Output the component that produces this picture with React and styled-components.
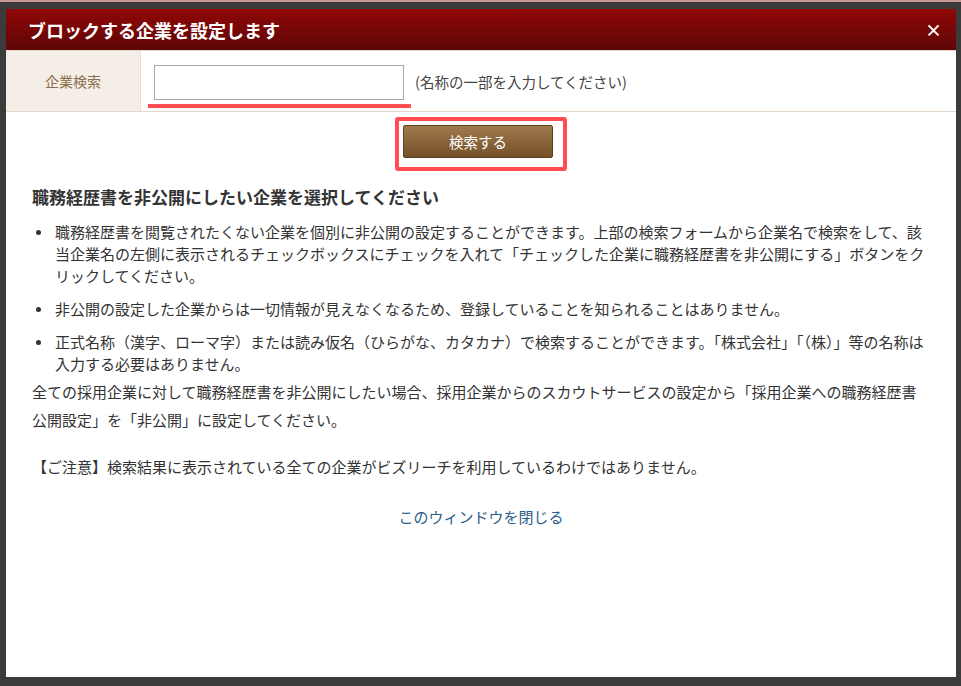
import React from "react";
import styled, { createGlobalStyle } from "styled-components";

const Global = createGlobalStyle`
  html, body { margin: 0; padding: 0; background: #3b3b3b; }
  body { font-family: "Noto Sans CJK JP", "Noto Sans", sans-serif; }
`;

const Page = styled.div`
  height: 686px;
  box-sizing: border-box;
  border-top: 2px solid #c99a9a;
  padding: 7px 5px 0 6px;
  background: #3b3b3b;
`;

const Modal = styled.div`
  background: #fff;
  height: 668px;
  display: flex;
  flex-direction: column;
`;

const Header = styled.div`
  height: 41px;
  background: linear-gradient(#910707, #5e0606);
  color: #fff;
  display: flex;
  align-items: center;
  justify-content: space-between;
  padding: 0 14px 0 22px;
  font-size: 18px;
  font-weight: bold;
`;

const Close = styled.span`
  font-size: 17px;
  font-weight: bold;
`;

const SearchRow = styled.div`
  display: flex;
  height: 62px;
  border-top: 1px solid #e3d6c8;
  border-bottom: 1px solid #e3d6c8;
  box-sizing: border-box;
`;

const Label = styled.div`
  width: 134px;
  background: #f4eee7;
  color: #8c6d4c;
  font-size: 14px;
  display: flex;
  align-items: center;
  justify-content: center;
  border-right: 1px solid #e8ddd1;
`;

const Field = styled.div`
  display: flex;
  align-items: center;
  padding-left: 7px;
  gap: 4px;
  font-size: 14.5px;
  color: #444;
`;

const InputWrap = styled.div`
  position: relative;
  padding: 0 7px 0 6px;
  &::after {
    content: "";
    position: absolute;
    left: 0; right: 0; bottom: -8px;
    height: 4px;
    background: #ff4d52;
  }
`;

const Input = styled.input`
  width: 250px;
  height: 35px;
  box-sizing: border-box;
  border: 1px solid #a9a9a9;
  margin-top: 3px;
`;

const ButtonBox = styled.div`
  align-self: center;
  margin-top: 5px;
  border: 4px solid #ff4d52;
  border-radius: 3px;
  padding: 4px 10px 9px 4px;
`;

const Button = styled.button`
  width: 150px;
  height: 33px;
  border: 1px solid #5c3f1e;
  border-radius: 2px;
  background: linear-gradient(#a07a4d, #75512a);
  color: #fff;
  font-family: inherit;
  font-size: 14.5px;
`;

const Content = styled.div`
  padding: 13px 26px 0 26px;
  color: #333;
  font-size: 15px;
`;

const Heading = styled.h2`
  font-size: 17px;
  font-weight: bold;
  margin: 0 0 12px;
`;

const List = styled.ul`
  margin: 0;
  padding: 0;
  list-style: none;
`;

const Item = styled.li`
  position: relative;
  padding-left: 23px;
  line-height: 22px;
  margin-bottom: 11px;
  &::before {
    content: "";
    position: absolute;
    left: 4px; top: 9px;
    width: 5px; height: 5px;
    border-radius: 50%;
    background: #333;
  }
`;

const Para = styled.p`
  margin: -8px 0 0;
  line-height: 28px;
`;

const Note = styled.p`
  margin: 19px 0 0;
  line-height: 28px;
`;

const CloseLink = styled.a`
  display: block;
  text-align: center;
  color: #2d5d8a;
  margin-top: 25px;
  text-decoration: none;
`;

export default function App() {
  return (
    <Page>
      <Global />
      <Modal>
        <Header>
          <span>ブロックする企業を設定します</span>
          <Close>×</Close>
        </Header>
        <SearchRow>
          <Label>企業検索</Label>
          <Field>
            <InputWrap><Input /></InputWrap>
            <span>(名称の一部を入力してください)</span>
          </Field>
        </SearchRow>
        <ButtonBox><Button>検索する</Button></ButtonBox>
        <Content>
          <Heading>職務経歴書を非公開にしたい企業を選択してください</Heading>
          <List>
            <Item>職務経歴書を閲覧されたくない企業を個別に非公開の設定することができます。上部の検索フォームから企業名で検索をして、該当企業名の左側に表示されるチェックボックスにチェックを入れて「チェックした企業に職務経歴書を非公開にする」ボタンをクリックしてください。</Item>
            <Item>非公開の設定した企業からは一切情報が見えなくなるため、登録していることを知られることはありません。</Item>
            <Item>正式名称（漢字、ローマ字）または読み仮名（ひらがな、カタカナ）で検索することができます。「株式会社」「（株）」等の名称は入力する必要はありません。</Item>
          </List>
          <Para>全ての採用企業に対して職務経歴書を非公開にしたい場合、採用企業からのスカウトサービスの設定から「採用企業への職務経歴書公開設定」を「非公開」に設定してください。</Para>
          <Note>【ご注意】検索結果に表示されている全ての企業がビズリーチを利用しているわけではありません。</Note>
          <CloseLink href="#">このウィンドウを閉じる</CloseLink>
        </Content>
      </Modal>
    </Page>
  );
}
